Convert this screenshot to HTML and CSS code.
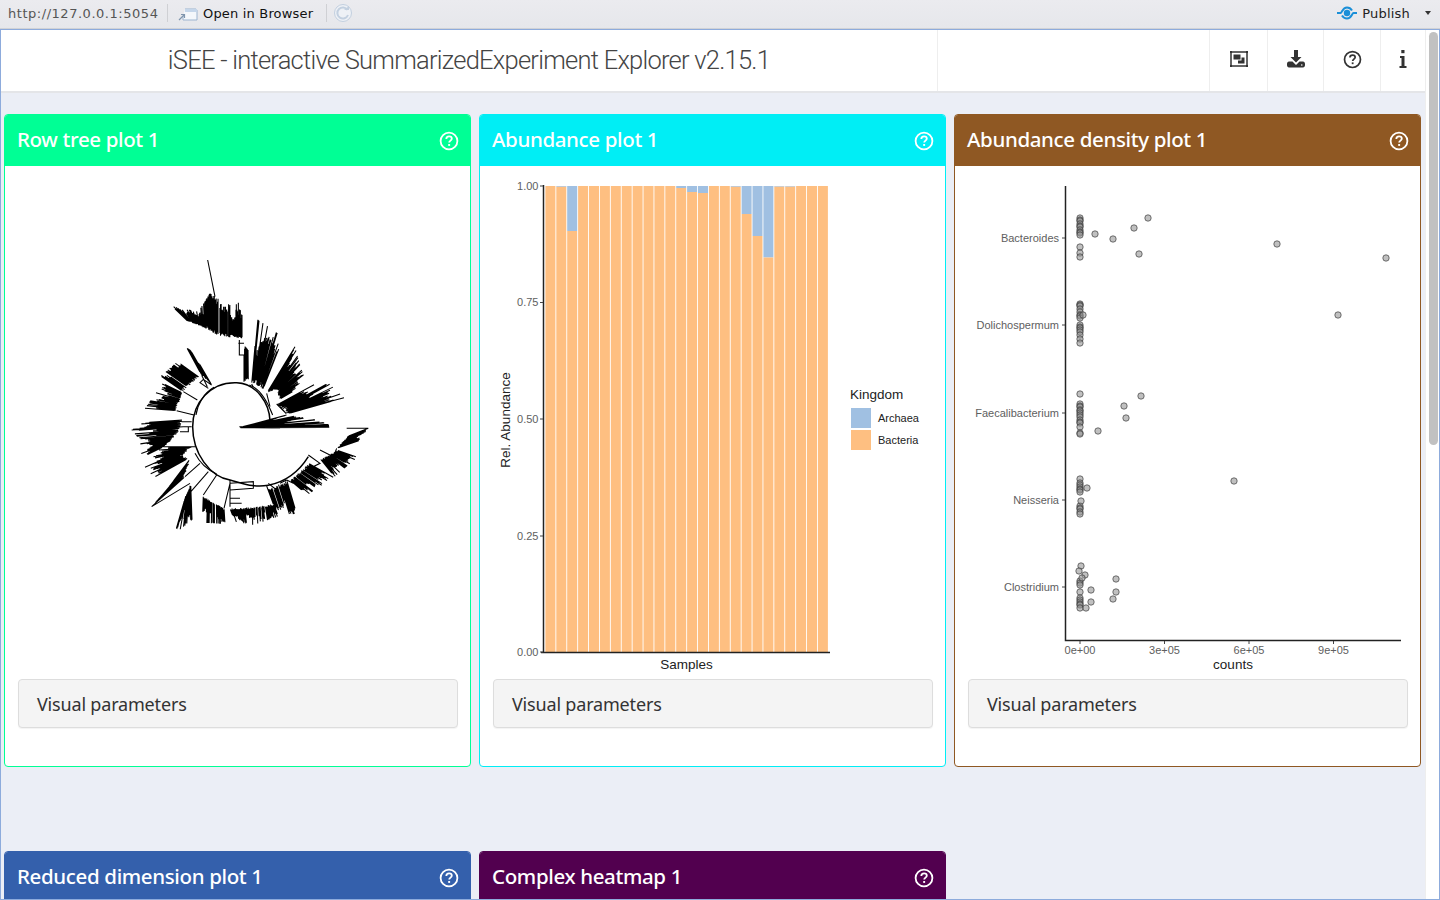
FILE: index.html
```html
<!DOCTYPE html>
<html lang="en">
<head>
<meta charset="utf-8">
<title>iSEE</title>
<link rel="stylesheet" href="styles.css">
</head>
<body>
<svg class="defs" aria-hidden="true"><defs>
  <symbol id="help" viewBox="0 0 20 20">
    <circle cx="10" cy="10" r="8.400" fill="none" stroke="currentColor" stroke-width="1.800"/>
    <path d="M7.300 8c0-1.700 1.200-2.600 2.800-2.600s2.700.9 2.700 2.300c0 1.900-2.600 2-2.600 3.900" fill="none" stroke="currentColor" stroke-width="1.800"/>
    <rect x="9.200" y="13" width="1.900" height="1.900" fill="currentColor"/>
  </symbol>
</defs></svg>

<div class="toolbar">
  <span class="url">http://127.0.0.1:5054</span>
  <span class="sep"></span>
  <svg class="open-icon" width="20" height="16" viewBox="0 0 20 16"><path d="M7 3h11l1 1v10H5V10" fill="#f4f7fb" stroke="#9db4cf"/><path d="M7 3h12v3H7z" fill="#c5d6ea"/><path d="M1 14l5-5M3 8.500h3.500V12" fill="none" stroke="#7f95ad" stroke-width="1.200"/></svg>
  <span class="open-label">Open in Browser</span>
  <span class="sep"></span>
  <svg class="reload" width="20" height="20" viewBox="0 0 20 20"><circle cx="10" cy="10" r="8.500" fill="#eef1f6" stroke="#c3d0e0"/><path d="M14.500 7A5.500 5.500 0 1 0 15 12" fill="none" stroke="#c3d0e0" stroke-width="2"/><path d="M11 7h5V3z" fill="#c3d0e0"/></svg>
  <span class="grow"></span>
  <svg class="publish-icon" width="22" height="16" viewBox="0 0 22 16"><circle cx="11" cy="8" r="3.200" fill="#1a8fd8"/><path d="M1 8h3.500c1.500 0 2-5.500 6.500-5.500 2.500 0 4 1.300 5 3M21 8h-3.500c-1.500 0-2 5.500-6.500 5.500-2.500 0-4-1.300-5-3" fill="none" stroke="#1a8fd8" stroke-width="2"/></svg>
  <span class="publish-label">Publish</span>
  <span class="caret"></span>
</div>

<div class="window">
  <div class="main">
    <header class="app-header">
      <div class="title">iSEE - interactive SummarizedExperiment Explorer v2.15.1</div>
      <div class="grow"></div>
      <nav class="nav">
        <div class="nav-cell nav-a">
          <svg width="18" height="16" viewBox="0 0 18 16"><rect x="1" y="1" width="16" height="14" fill="none" stroke="#333" stroke-width="1.500"/><path d="M0 0h2v2H0zM16 0h2v2h-2zM0 14h2v2H0zM16 14h2v2h-2z" fill="#333"/><rect x="3.500" y="3.500" width="7" height="5" fill="#333"/><path d="M8 12.500l6.500-.1V6.500l-3 0v3H8z" fill="#333"/></svg>
        </div>
        <div class="nav-cell nav-b">
          <svg width="18" height="18" viewBox="0 0 18 18"><path d="M7 0h4v7h3.500L9 12.500 3.500 7H7z" fill="#333"/><path d="M2 11.500h3.500L9 15l3.500-3.500H16c1.200 0 2 1 2 2.500v1c0 1.500-.8 2.500-2 2.500H2c-1.200 0-2-1-2-2.500v-1c0-1.500.8-2.500 2-2.500z" fill="#333"/><circle cx="14.800" cy="15" r=".8" fill="#fff"/></svg>
        </div>
        <div class="nav-cell nav-c"><svg class="help-dark" width="19" height="19"><use href="#help"/></svg></div>
        <div class="nav-cell nav-d">
          <svg width="8" height="18" viewBox="0 0 8 18"><rect x="2.300" y="0" width="3.200" height="3.200" fill="#333"/><path d="M1 6h4.500v10H7.500v2H.5v-2h2V8H1z" fill="#333"/></svg>
        </div>
      </nav>
    </header>

    <div class="content">
      <section class="box box-green">
        <div class="box-head"><h3>Row tree plot 1</h3><svg class="help" width="20" height="20"><use href="#help"/></svg></div>
        <div class="box-body">
          <svg id="tree" class="plot" viewBox="5 166 465 513"></svg>
          <div class="collapse-bar">Visual parameters</div>
        </div>
      </section>

      <section class="box box-cyan">
        <div class="box-head"><h3>Abundance plot 1</h3><svg class="help" width="20" height="20"><use href="#help"/></svg></div>
        <div class="box-body">
          <svg class="plot" viewBox="480 166 465 513">
            <g id="bars"></g>
            <path class="axis" d="M543.500 185V653M541 652.500H830"/>
            <path class="tick" d="M540 186h3M540 302.500h3M540 419h3M540 536h3M540 652h3"/>
            <text class="ax r" x="538.500" y="189.500">1.00</text>
            <text class="ax r" x="538.500" y="305.500">0.75</text>
            <text class="ax r" x="538.500" y="422.500">0.50</text>
            <text class="ax r" x="538.500" y="539.500">0.25</text>
            <text class="ax r" x="538.500" y="655.500">0.00</text>
            <text class="lab m" x="686.500" y="668.500">Samples</text>
            <text class="lab m" transform="translate(509.500 420) rotate(-90)">Rel. Abundance</text>
            <text class="lab" x="850" y="399">Kingdom</text>
            <rect class="c-arch" x="851" y="408" width="20" height="20"/>
            <rect class="c-bact" x="851" y="430" width="20" height="20"/>
            <text class="leg" x="878" y="422">Archaea</text>
            <text class="leg" x="878" y="444">Bacteria</text>
          </svg>
          <div class="collapse-bar">Visual parameters</div>
        </div>
      </section>

      <section class="box box-brown">
        <div class="box-head"><h3>Abundance density plot 1</h3><svg class="help" width="20" height="20"><use href="#help"/></svg></div>
        <div class="box-body">
          <svg class="plot" viewBox="955 166 465 513">
            <g id="points"></g>
            <path class="axis" d="M1065.500 186V640.500H1401"/>
            <path class="tick" d="M1062 238h3M1062 325h3M1062 413h3M1062 500h3M1062 587h3M1080 641v3M1164.500 641v3M1249 641v3M1333.500 641v3"/>
            <text class="ax r" x="1059" y="242">Bacteroides</text>
            <text class="ax r" x="1059" y="329">Dolichospermum</text>
            <text class="ax r" x="1059" y="417">Faecalibacterium</text>
            <text class="ax r" x="1059" y="504">Neisseria</text>
            <text class="ax r" x="1059" y="591">Clostridium</text>
            <text class="ax m" x="1080" y="654">0e+00</text>
            <text class="ax m" x="1164.500" y="654">3e+05</text>
            <text class="ax m" x="1249" y="654">6e+05</text>
            <text class="ax m" x="1333.500" y="654">9e+05</text>
            <text class="lab m" x="1233" y="669">counts</text>
          </svg>
          <div class="collapse-bar">Visual parameters</div>
        </div>
      </section>

      <section class="box box-blue">
        <div class="box-head"><h3>Reduced dimension plot 1</h3><svg class="help" width="20" height="20"><use href="#help"/></svg></div>
      </section>

      <section class="box box-purple">
        <div class="box-head"><h3>Complex heatmap 1</h3><svg class="help" width="20" height="20"><use href="#help"/></svg></div>
      </section>
    </div>
  </div>
  <div class="scrollbar"><div class="thumb"></div></div>
</div>
<script src="plots.js"></script>
</body>
</html>
```
FILE: styles.css
```css
* { box-sizing: border-box; }
html, body { margin: 0; height: 100%; overflow: hidden; }
body {
  display: flex;
  flex-direction: column;
  font-family: "Liberation Sans", Arial, sans-serif;
  background: #fff;
}
.defs { width: 0; height: 0; display: block; position: absolute; }
.grow { flex: 1; }

.toolbar {
  height: 29px;
  flex: none;
  display: flex;
  align-items: center;
  padding: 0 9px 2px 8px;
  background: linear-gradient(#ebebef, #e6e7eb);
  border-bottom: 1px solid #d0d2d6;
  font-family: "DejaVu Sans", sans-serif;
  font-size: 13px;
}
.url { color: #555; letter-spacing: .53px; width: 159px; white-space: nowrap; }
.sep { width: 1px; height: 18px; background: #cfd0d4; }
.open-icon { margin: 1px 5px 0 10px; }
.open-label { color: #111; letter-spacing: .18px; width: 123px; white-space: nowrap; }
.reload { margin-left: 6px; }
.publish-icon { margin-right: 4px; }
.publish-label { color: #222; letter-spacing: .2px; margin-right: 15px; }
.caret {
  width: 0; height: 0;
  border-left: 3.500px solid transparent;
  border-right: 3.500px solid transparent;
  border-top: 4px solid #333;
}

.window {
  flex: 1;
  min-height: 0;
  display: flex;
  border: 1px solid #8dabdc;
  overflow: hidden;
}
.main { flex: 1; min-width: 0; display: flex; flex-direction: column; background: #ebeef6; }
.scrollbar { width: 14px; flex: none; background: #fff; padding: 2px 1px 0 2px; border-left: 1px solid #eee; }
.thumb { height: 413px; width: 9px; background: #c1c1c1; border-radius: 5px; margin-left: 1px; }

.app-header {
  flex: none;
  height: 63px;
  display: flex;
  background: #fff;
  border-bottom: 2px solid #e4e5e8;
}
.title {
  width: 937px;
  border-right: 1px solid #eee;
  text-align: center;
  font-family: Roboto, "Liberation Sans", sans-serif;
  font-weight: 300;
  font-size: 25.500px;
  letter-spacing: -.75px;
  line-height: 60px;
  color: #444;
  white-space: nowrap;
}
.nav { display: flex; }
.nav-cell {
  display: flex;
  align-items: center;
  justify-content: center;
  border-left: 1px solid #eee;
  padding-bottom: 3px;
}
.nav-a { width: 58px; }
.nav-b { width: 56px; }
.nav-c { width: 57px; }
.nav-d { width: 45px; }
.help-dark { color: #333; }

.content {
  flex: 1;
  display: grid;
  grid-template-columns: repeat(3, 467px);
  column-gap: 8px;
  row-gap: 84px;
  padding: 21px 0 0 3px;
  align-content: start;
}
.box {
  border: 1px solid;
  border-radius: 4px;
  background: #fff;
  overflow: hidden;
}
.box-head {
  height: 51px;
  display: flex;
  align-items: center;
  justify-content: space-between;
  padding: 0 11px 0 12px;
  color: #fff;
}
.box-head h3 {
  margin: 0 0 4px;
  font-family: "Noto Sans", sans-serif;
  font-weight: 500;
  font-size: 20.500px;
  letter-spacing: -.36px;
}
.help { flex: none; }
.box-green { border-color: #00ff95; } .box-green .box-head { background: #00ff95; }
.box-cyan { border-color: #00eef5; } .box-cyan .box-head { background: #00eef5; }
.box-brown { border-color: #8f5823; } .box-brown .box-head { background: #8f5823; }
.box-blue { border-color: #3460ac; } .box-blue .box-head { background: #3460ac; }
.box-purple { border-color: #52004f; } .box-purple .box-head { background: #52004f; }

.box-body { height: 600px; display: flex; flex-direction: column; }
.plot { display: block; width: 465px; height: 513px; flex: none; }
.collapse-bar {
  margin: 0 12px 0 13px;
  height: 49px;
  background: #f4f4f4;
  border: 1px solid #ddd;
  border-radius: 4px;
  box-shadow: 0 1px 1px rgba(0,0,0,.05);
  padding-left: 18px;
  font-family: "Noto Sans", sans-serif;
  font-size: 18px;
  letter-spacing: -.18px;
  line-height: 48px;
  color: #333;
}

.axis { fill: none; stroke: #222; stroke-width: 1.500; }
.tick { fill: none; stroke: #444; stroke-width: 1; }
.ax { font-family: "Liberation Sans", sans-serif; font-size: 11px; fill: #5e5e5e; }
.r { text-anchor: end; }
.m { text-anchor: middle; }
.lab { font-family: "Liberation Sans", sans-serif; font-size: 13.500px; fill: #222; }
.leg { font-family: "Liberation Sans", sans-serif; font-size: 11px; fill: #222; }
.c-arch { fill: #a0c0e2; }
.c-bact { fill: #febf81; }
.pt { fill: rgba(150,150,150,.6); stroke: rgba(40,40,40,.6); stroke-width: 1; }
.branch { fill: none; stroke: #000; stroke-width: 3.200; }
.rail { fill: none; stroke: #000; stroke-width: 4.500; }
```
FILE: plots.js
```js
var NS = 'http://www.w3.org/2000/svg';
function el(parent, name, attrs) {
  var n = document.createElementNS(NS, name);
  for (var k in attrs) n.setAttribute(k, attrs[k]);
  parent.appendChild(n);
  return n;
}

/* stacked bars: y of the Archaea/Bacteria boundary for each of 26 samples */
var tops = {1:186.8, 2:231, 12:188, 13:192, 14:193, 17:186.8, 18:214, 19:236, 20:257.5, 21:186.7, 22:186.7};
var bars = document.getElementById('bars');
for (var i = 0; i < 26; i++) {
  var x = 545.4 + i * 10.9, w = 10, y = tops[i] || 186;
  if (y > 186) el(bars, 'rect', {x: x, y: 186, width: w, height: y - 186, 'class': 'c-arch'});
  el(bars, 'rect', {x: x, y: y, width: w, height: 652 - y, 'class': 'c-bact'});
}

/* density plot points */
var col = [218,220,221,224,226,227,230,232,233,247,253,257,235,
  304,305,306,309,312,315,316,318,325,327,328,330,332,335,339,343,
  394,404,406,407,410,411,413,415,417,420,422,423,427,433,434,
  479,483,485,487,489,490,492,506,508,509,512,514,
  581,583,585,592,598,600,602,604,605,608];
var others = [[1095,234],[1113,239],[1134,228],[1148,218],[1139,254],[1277,244],[1386,258],[1338,315],
  [1083,315],[1124,406],[1141,396],[1126,418],[1098,431],[1234,481],[1087,488],[1081,501],
  [1081,566],[1079,571],[1085,575],[1082,578],[1086,608],[1091,602],[1091,590],[1116,579],[1116,592],[1113,599]];
var pts = document.getElementById('points');
col.forEach(function (y) { el(pts, 'circle', {cx: 1080, cy: y, r: 3.2, 'class': 'pt'}); });
others.forEach(function (p) { el(pts, 'circle', {cx: p[0], cy: p[1], r: 3.2, 'class': 'pt'}); });

/* phylogenetic tree: tufts of tip branches between an inner and an outer polyline */
var seed = 7;
function rnd() { seed = (seed * 16807) % 2147483647; return seed / 2147483647; }
function at(line, t) {
  if (line.length === 1) return line[0];
  var s = t * (line.length - 1), k = Math.min(Math.floor(s), line.length - 2), f = s - k;
  return [line[k][0] + (line[k + 1][0] - line[k][0]) * f, line[k][1] + (line[k + 1][1] - line[k][1]) * f];
}
function len(line) {
  var d = 0;
  for (var j = 1; j < line.length; j++) d += Math.hypot(line[j][0] - line[j - 1][0], line[j][1] - line[j - 1][1]);
  return d;
}
var bands = [
  [[[358,533]], [[452,510],[500,495],[580,508],[625,523],[628,532],[450,534]], .8],
  [[[500,492],[490,480],[470,465]], [[672,443],[630,403],[582,404]], 1],
  [[[475,450],[470,420],[440,430]], [[560,400],[540,345],[525,290]], 1],
  [[[428,420],[410,410],[395,402]], [[490,262],[445,230],[412,208]], 1],
  [[[385,395],[372,395]], [[384,300],[372,285]], 1],
  [[[366,270],[340,265],[300,262],[270,245],[240,228],[205,215]], [[366,150],[340,170],[300,150],[270,130],[235,185],[156,168]], 1],
  [[[275,405],[245,376]], [[212,296],[195,283]], 1],
  [[[238,382],[190,425]], [[172,335],[122,378]], 1],
  [[[190,430],[170,482]], [[128,400],[75,475]], 1],
  [[[190,510],[185,530],[170,560],[130,590]], [[70,518],[35,540],[60,570],[65,622]], 1],
  [[[215,590],[190,615],[205,625]], [[125,590],[75,652],[102,682]], 1],
  [[[212,625],[195,680]], [[132,730],[95,770]], 1],
  [[[212,700],[195,745]], [[216,810],[165,850]], 1],
  [[[250,735],[312,775]], [[247,818],[315,822]], 1],
  [[[330,775],[400,770],[460,762]], [[345,815],[400,825],[472,800]], 1],
  [[[445,715],[500,690]], [[472,792],[530,792]], 1],
  [[[510,690],[565,640]], [[562,735],[640,682]], 1],
  [[[600,628],[650,600]], [[642,682],[712,622]], 1],
  [[[650,595],[680,560]], [[716,572],[745,535]], 1]
];
var d = '';
bands.forEach(function (b) {
  var n = Math.round(Math.max(len(b[1]), len(b[0])) / 2.4 * b[2]);
  var base = .8, left = 0;
  for (var j = 0; j < n; j++) {
    if (left-- <= 0) { base = .42 + rnd() * .5; left = 2 + Math.floor(rnd() * 5); }
    if (rnd() < .06) continue;
    var t = j / (n - 1), p = at(b[0], t), q = at(b[1], t);
    var f = Math.min(1, base + rnd() * .2);
    if (rnd() < .14) f = 1;
    var s = .02 + rnd() * .1;
    d += 'M' + (p[0] + (q[0] - p[0]) * s).toFixed(1) + ' ' + (p[1] + (q[1] - p[1]) * s).toFixed(1) + 'L' + (p[0] + (q[0] - p[0]) * f).toFixed(1) + ' ' + (p[1] + (q[1] - p[1]) * f).toFixed(1);
  }
});
/* single long tips and connecting branches */
d += 'M285 140L263 30M680 535H745M190 530L35 540M215 590L75 652M210 700L95 770M495 490L672 443M625 530H358';
d += 'M358 270V315H372V395M355 280H372M275 405L250 388L240 398L265 415';
d += 'M470 462L498 490L480 470M330 690V770M330 720L400 715V695L330 700M330 745H360M330 760H365';
d += 'M565 615L600 640L560 660M600 600L640 620L650 595M445 700L470 720M500 690L520 700';
d += 'M190 530H215M185 515H215M180 545H205V530';
d += 'M245 376L262 410M190 425L232 450M170 482L222 495M130 590L225 590M195 680L240 640M195 745L265 665M250 735L290 675M312 775L330 700M460 762L440 708M500 690L480 700M440 430L450 470M395 402L400 412';
var g = el(document.getElementById('tree'), 'g', {transform: 'translate(120 250) scale(.33333)'});
el(g, 'path', {d: d, 'class': 'branch'});
el(g, 'path', {'class': 'rail', d: 'M450 512C448 460 410 400 350 398C270 395 218 460 218 530C218 610 270 680 330 690C370 700 400 714 445 706C500 695 540 660 565 620'});
el(g, 'path', {'class': 'branch', d: 'M282 412C250 430 232 465 228 495M225 610C240 640 262 660 290 672M388 405C420 415 440 450 458 495'});
```
